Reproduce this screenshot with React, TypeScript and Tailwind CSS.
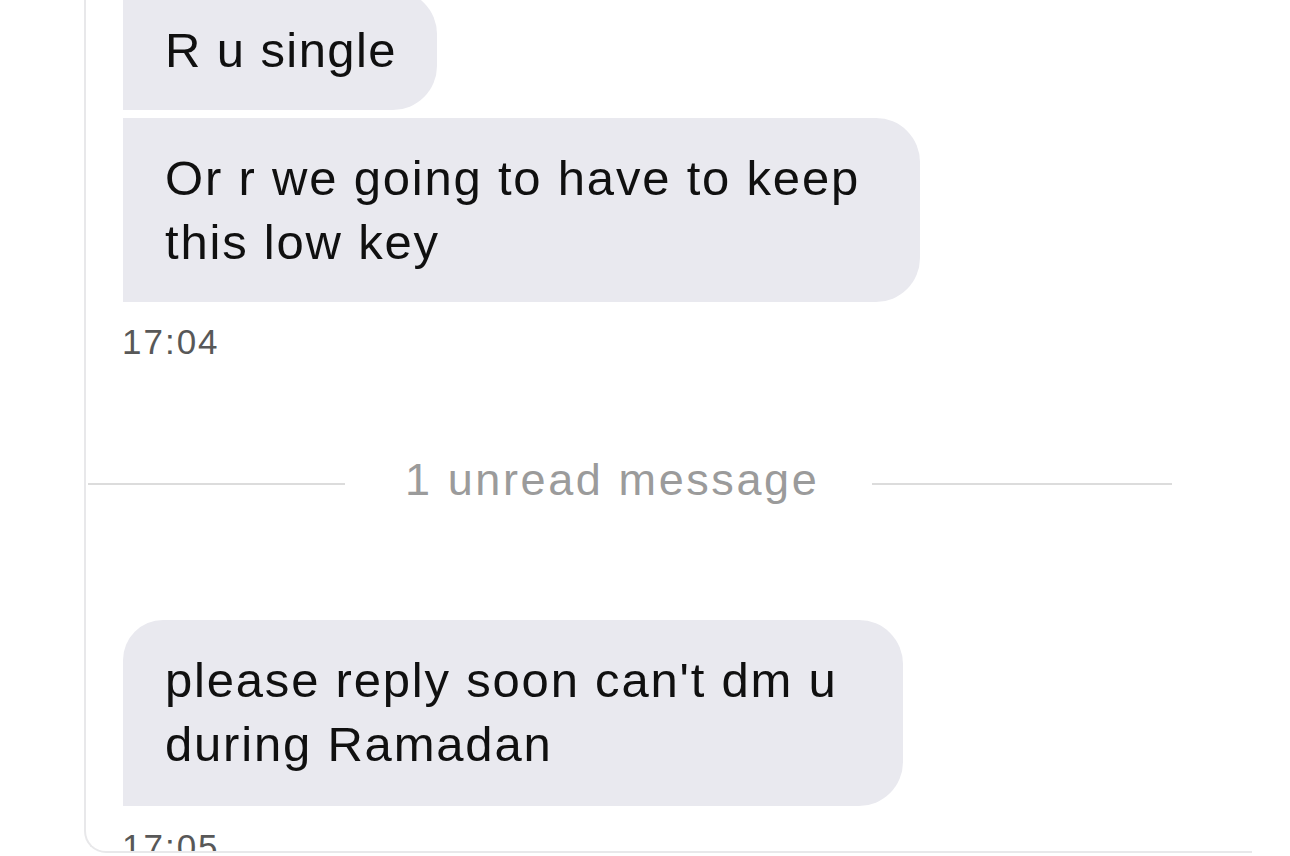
import React from "react";

const font = { fontFamily: '"Liberation Sans", Arial, sans-serif' };

export default function App() {
  return (
    <div className="w-[1290px] h-[856px] bg-white overflow-hidden" style={font}>
      <div className="ml-[84px] w-[1168px] h-[853px] border-l-2 border-b-2 border-[#e8e8ea] rounded-bl-[22px] overflow-hidden pl-[37px]">
        <div className="-mt-[10px] flex flex-col items-start gap-[8px]">
          <div className="w-[314px] bg-[#e9e9ef] rounded-r-[44px] pl-[42px] py-[28px] text-[49px] leading-[64px] tracking-[1.4px] text-[#101010]">
            R u single
          </div>
          <div className="w-[797px] bg-[#e9e9ef] rounded-r-[44px] pl-[42px] py-[28px] text-[49px] leading-[64px] tracking-[1.8px] text-[#101010] whitespace-nowrap">
            Or r we going to have to keep
            <br />
            this low key
          </div>
        </div>
        <div className="mt-[22px] -ml-[1px] text-[35px] leading-[36px] tracking-[2px] text-[#585858]">17:04</div>
        <div className="mt-[94px] -ml-[35px] flex items-center">
          <div className="w-[257px] h-[2px] bg-[#dcdcdc]" />
          <div className="ml-[60px] w-[467px] pb-[8px] text-[45px] leading-[52px] tracking-[2.6px] text-[#9b9b9b] whitespace-nowrap">
            1 unread message
          </div>
          <div className="w-[300px] h-[2px] bg-[#dcdcdc]" />
        </div>
        <div className="mt-[106px] w-[780px] bg-[#e9e9ef] rounded-tl-[40px] rounded-r-[44px] pl-[42px] pt-[28px] pb-[30px] text-[49px] leading-[64px] tracking-[1.8px] text-[#101010] whitespace-nowrap">
          please reply soon can't dm u
          <br />
          during Ramadan
        </div>
        <div className="mt-[23px] -ml-[1px] text-[35px] leading-[36px] tracking-[2px] text-[#585858]">17:05</div>
      </div>
    </div>
  );
}
